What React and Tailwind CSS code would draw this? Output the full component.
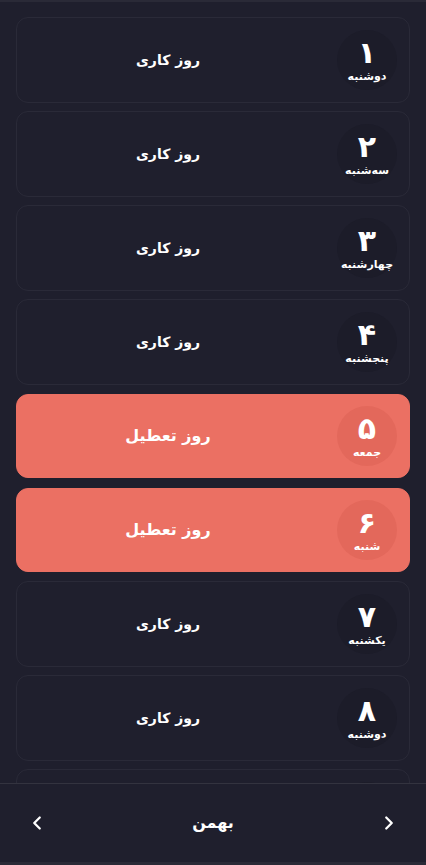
import React from 'react';
import { ChevronLeft, ChevronRight } from 'lucide-react';

const days = [
  { num: '۱', name: 'دوشنبه', off: false },
  { num: '۲', name: 'سه‌شنبه', off: false },
  { num: '۳', name: 'چهارشنبه', off: false },
  { num: '۴', name: 'پنجشنبه', off: false },
  { num: '۵', name: 'جمعه', off: true },
  { num: '۶', name: 'شنبه', off: true },
  { num: '۷', name: 'یکشنبه', off: false },
  { num: '۸', name: 'دوشنبه', off: false },
  { num: '۹', name: 'سه‌شنبه', off: false },
];

const DayCard = ({ day }) => (
  <div
    className={
      day.off
        ? 'h-[84px] shrink-0 flex items-center px-3 rounded-xl bg-[#eb7063] border border-[#eb7063]'
        : 'h-[86px] shrink-0 flex items-center px-3 rounded-xl bg-[#1f1f2d] border border-[#2a2a38]'
    }
  >
    <div
      className={
        day.off
          ? 'w-[60px] h-[60px] rounded-full bg-[#e3685b] flex flex-col items-center justify-center text-white'
          : 'w-[60px] h-[60px] rounded-full bg-[#1c1c29] flex flex-col items-center justify-center text-white'
      }
    >
      <span className="text-[30px] font-bold leading-[30px]">{day.num}</span>
      <span className="text-[11px] font-bold leading-[13px] mt-[2px]">{day.name}</span>
    </div>
    <div className="flex-1 text-center pr-[30px]">
      {day.off ? (
        <span className="text-white text-[16px] font-bold">روز تعطیل</span>
      ) : (
        <span className="text-white text-[14px] font-bold">روز کاری</span>
      )}
    </div>
  </div>
);

export default function App() {
  return (
    <div
      dir="rtl"
      className="h-[865px] w-full flex flex-col bg-[#1f1f2d] border-t-2 border-[#2a2a37] overflow-hidden"
      style={{ fontFamily: '"DejaVu Sans", sans-serif' }}
    >
      <div className="flex-1 min-h-0 overflow-hidden px-4 pt-[15px] flex flex-col">
        {days.map((day, i) => (
          <div key={i} className={day.off ? 'shrink-0 py-[1px] mb-[8px]' : 'shrink-0 mb-[8px]'}>
            <DayCard day={day} />
          </div>
        ))}
      </div>
      <div className="h-[82px] shrink-0 border-t border-[#33333f] border-b-[3px] border-b-[#2a2a37] flex items-center justify-between px-[26px] text-white">
        <ChevronRight size={22} strokeWidth={2.5} />
        <span className="text-[16px] font-bold">بهمن</span>
        <ChevronLeft size={22} strokeWidth={2.5} />
      </div>
    </div>
  );
}
